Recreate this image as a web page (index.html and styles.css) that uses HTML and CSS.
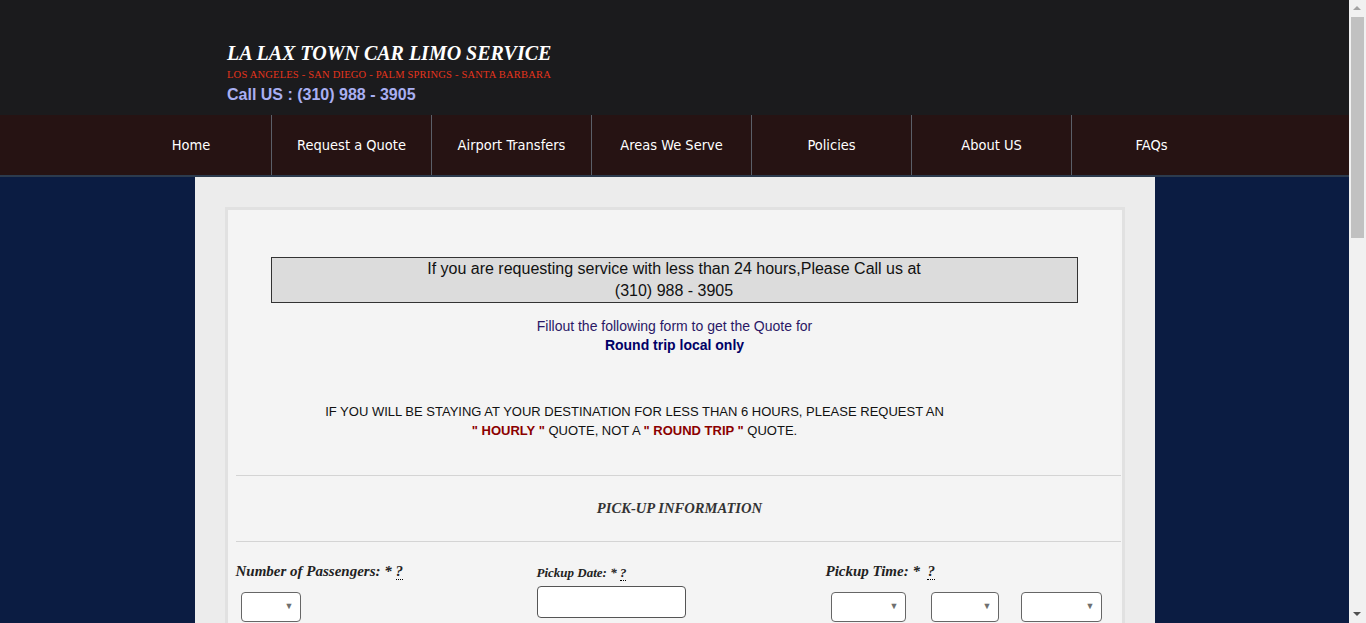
FILE: index.html
```html
<!DOCTYPE html>
<html lang="en">
<head>
<meta charset="utf-8">
<title>LA LAX Town Car Limo Service - Round Trip Quote</title>
<link rel="stylesheet" href="styles.css">
</head>
<body>
<div class="site">
<header class="site-header">
  <div class="header-inner">
    <div class="brand">
      <h1 class="brand-title">LA LAX TOWN CAR LIMO SERVICE</h1>
      <p class="brand-areas">LOS ANGELES - SAN DIEGO - PALM SPRINGS - SANTA BARBARA</p>
      <p class="brand-phone">Call US : (310) 988 - 3905</p>
    </div>
  </div>
</header>
<nav class="main-nav">
  <ul class="nav-list">
    <li class="nav-item"><a href="#">Home</a></li>
    <li class="nav-item"><a href="#">Request a Quote</a></li>
    <li class="nav-item"><a href="#">Airport Transfers</a></li>
    <li class="nav-item"><a href="#">Areas We Serve</a></li>
    <li class="nav-item"><a href="#">Policies</a></li>
    <li class="nav-item"><a href="#">About US</a></li>
    <li class="nav-item"><a href="#">FAQs</a></li>
  </ul>
</nav>
<main class="page">
  <div class="form-box">
    <div class="notice">If you are requesting service with less than 24 hours,Please Call us at<br>(310) 988 - 3905</div>
    <p class="intro">Fillout the following form to get the Quote for<br><strong class="intro-strong">Round trip local only</strong></p>
    <p class="warning">IF YOU WILL BE STAYING AT YOUR DESTINATION FOR LESS THAN 6 HOURS, PLEASE REQUEST AN<br><strong class="hl">" HOURLY "</strong> QUOTE, NOT A <strong class="hl">" ROUND TRIP "</strong> QUOTE.</p>
    <div class="section-head">PICK-UP INFORMATION</div>
    <div class="field-row">
      <div class="field">
        <label class="lbl">Number of Passengers: * <abbr class="tip" title="Required">?</abbr></label>
        <div class="selects"><span class="sel sel-pax"><select><option></option></select></span></div>
      </div>
      <div class="field field-date">
        <label class="lbl lbl-small">Pickup Date: * <abbr class="tip" title="Required">?</abbr></label>
        <input class="date-input" type="text">
      </div>
      <div class="field">
        <label class="lbl">Pickup Time: * &nbsp;<abbr class="tip" title="Required">?</abbr></label>
        <div class="selects selects-time">
          <span class="sel sel-h"><select><option></option></select></span>
          <span class="sel sel-m"><select><option></option></select></span>
          <span class="sel sel-ap"><select><option></option></select></span>
        </div>
      </div>
    </div>
    <div class="field-row">
      <div class="field">
        <label class="lbl">Pickup Address: *</label>
        <input class="text-input" type="text">
      </div>
      <div class="field">
        <label class="lbl">City: *</label>
        <input class="text-input" type="text">
      </div>
      <div class="field">
        <label class="lbl">Zip Code: *</label>
        <input class="text-input" type="text">
      </div>
    </div>
    <div class="section-head">DROP-OFF INFORMATION</div>
    <div class="field-row">
      <div class="field">
        <label class="lbl">Drop-off Address: *</label>
        <input class="text-input" type="text">
      </div>
      <div class="field">
        <label class="lbl">City: *</label>
        <input class="text-input" type="text">
      </div>
      <div class="field">
        <label class="lbl">Zip Code: *</label>
        <input class="text-input" type="text">
      </div>
    </div>
    <div class="section-head">CONTACT INFORMATION</div>
    <div class="field-row">
      <div class="field">
        <label class="lbl">Name: *</label>
        <input class="text-input" type="text">
      </div>
      <div class="field">
        <label class="lbl">Phone: *</label>
        <input class="text-input" type="text">
      </div>
      <div class="field">
        <label class="lbl">Email: *</label>
        <input class="text-input" type="text">
      </div>
    </div>
    <div class="submit-row"><button class="submit" type="button">Get Quote</button></div>
  </div>
</main>
</div>
<div class="scrollbar" aria-hidden="true">
  <span class="sb-btn sb-up"></span>
  <span class="sb-track"><span class="sb-thumb"></span></span>
  <span class="sb-btn sb-down"></span>
</div>
</body>
</html>
```
FILE: styles.css
```css
html, body {
  margin: 0;
  padding: 0;
}
body {
  background: #0b1c42;
  font-family: "Liberation Sans", Arial, sans-serif;
}
.site {
  margin-right: 17px;
}
/* classic scrollbar drawn at the window edge */
.scrollbar {
  position: fixed;
  top: 0;
  right: 0;
  width: 17px;
  height: 100vh;
  background: #f1f1f1;
  display: flex;
  flex-direction: column;
}
.sb-btn {
  position: relative;
  height: 17px;
  flex: none;
}
.sb-up::after,
.sb-down::after {
  content: "";
  position: absolute;
  left: 4px;
  width: 0;
  height: 0;
  border-left: 4px solid transparent;
  border-right: 4px solid transparent;
}
.sb-up::after {
  top: 6px;
  border-bottom: 4px solid #a3a3a3;
}
.sb-down::after {
  top: 6px;
  border-top: 4px solid #505050;
}
.sb-track {
  flex: 1;
  padding: 0 2px;
}
.sb-thumb {
  display: block;
  height: 221px;
  background: #c1c1c1;
}
.site-header {
  background: #1b1b1d;
}
.header-inner {
  width: 1127px;
  margin: 0 auto;
}
.brand {
  padding: 40px 0 11px 116px;
}
.brand-title {
  margin: 0;
  font-family: "Liberation Serif", serif;
  font-style: italic;
  font-weight: bold;
  font-size: 20px;
  line-height: 26px;
  color: #ffffff;
}
.brand-areas {
  margin: 2px 0 0;
  font-family: "Liberation Serif", serif;
  font-size: 10.5px;
  line-height: 14px;
  color: #e5341c;
  letter-spacing: 0.2px;
}
.brand-phone {
  margin: 3px 0 0;
  font-family: "Liberation Sans", Arial, sans-serif;
  font-weight: bold;
  font-size: 16px;
  line-height: 19px;
  color: #a9aff2;
}
.main-nav {
  background: #261313;
  border-bottom: 2px solid #2c3b4e;
}
.nav-list {
  list-style: none;
  margin: 0 auto;
  padding: 0;
  width: 1127px;
  display: flex;
}
.nav-item {
  width: 160px;
  height: 60px;
  text-align: center;
}
.nav-item + .nav-item {
  border-left: 1px solid #5b5f68;
  width: 159px;
}
.nav-item a {
  display: block;
  line-height: 60px;
  color: #ffffff;
  text-decoration: none;
  font-family: "Liberation Sans Narrow", "DejaVu Sans Condensed", sans-serif;
  font-size: 14.5px;
}
.page {
  width: 900px;
  margin: 0 auto;
  background: #ececec;
  padding: 30px 30px 60px;
}
.form-box {
  border: 3px solid #e1e1e1;
  background: #f4f4f4;
  padding: 47px 1px 40px 8px;
}
.notice {
  margin: 0 43px 0 35px;
  border: 1px solid #333333;
  background: #dcdcdc;
  text-align: center;
  font-size: 16px;
  line-height: 22px;
  color: #111111;
}
.intro {
  margin: 14px 7px 0 0;
  text-align: center;
  font-size: 14px;
  line-height: 19px;
  color: #2a1866;
}
.intro-strong {
  color: #000066;
}
.warning {
  margin: 47px 87px 0 0;
  text-align: center;
  font-size: 13px;
  line-height: 19px;
  color: #111111;
}
.hl {
  color: #8b0000;
}
.section-head {
  margin-top: 35px;
  border-top: 1px solid #d4d4d4;
  border-bottom: 1px solid #d4d4d4;
  height: 65px;
  line-height: 65px;
  text-align: center;
  padding-left: 3px;
  font-family: "Liberation Serif", serif;
  font-style: italic;
  font-weight: bold;
  font-size: 14.6px;
  color: #333333;
}
.field-row {
  display: grid;
  grid-template-columns: 295px 295px 295px;
  margin-top: 19px;
}
.lbl {
  display: block;
  font-family: "Liberation Serif", serif;
  font-style: italic;
  font-weight: bold;
  font-size: 15px;
  line-height: 20px;
  color: #222222;
}
.lbl-small {
  font-size: 13px;
  line-height: 20px;
  margin-top: 2px;
}
.field-date {
  padding-left: 6px;
}
.tip {
  text-decoration: none;
  border-bottom: 1px dotted #000;
}
.selects {
  display: flex;
  margin-top: 11px;
  padding-left: 5px;
}
.selects-time {
  gap: 25px;
}
.sel {
  position: relative;
  display: block;
}
.sel select {
  appearance: none;
  -webkit-appearance: none;
  display: block;
  width: 100%;
  height: 30px;
  border: 1px solid #666666;
  border-radius: 4px;
  background: #ffffff;
  box-sizing: border-box;
}
.sel::after {
  content: "\25BC";
  position: absolute;
  right: 7px;
  top: 9px;
  font-size: 9px;
  color: #6f6f6f;
  pointer-events: none;
}
.sel-pax { width: 60px; }
.sel-h { width: 75px; }
.sel-m { width: 68px; }
.sel-ap { width: 81px; }
.selects-time .sel-ap { margin-left: -3px; }
.date-input {
  display: block;
  margin-top: 3px;
  width: 149px;
  height: 32px;
  box-sizing: border-box;
  border: 1px solid #555555;
  border-radius: 4px;
  background: #ffffff;
}
.text-input {
  display: block;
  margin-top: 8px;
  width: 240px;
  height: 32px;
  box-sizing: border-box;
  border: 1px solid #555555;
  border-radius: 4px;
  background: #ffffff;
}
.field-row + .field-row {
  margin-top: 30px;
}
.submit-row {
  margin-top: 60px;
  text-align: center;
}
.submit {
  font-size: 16px;
  padding: 10px 30px;
  background: #261313;
  color: #ffffff;
  border: 0;
  border-radius: 4px;
}
```
